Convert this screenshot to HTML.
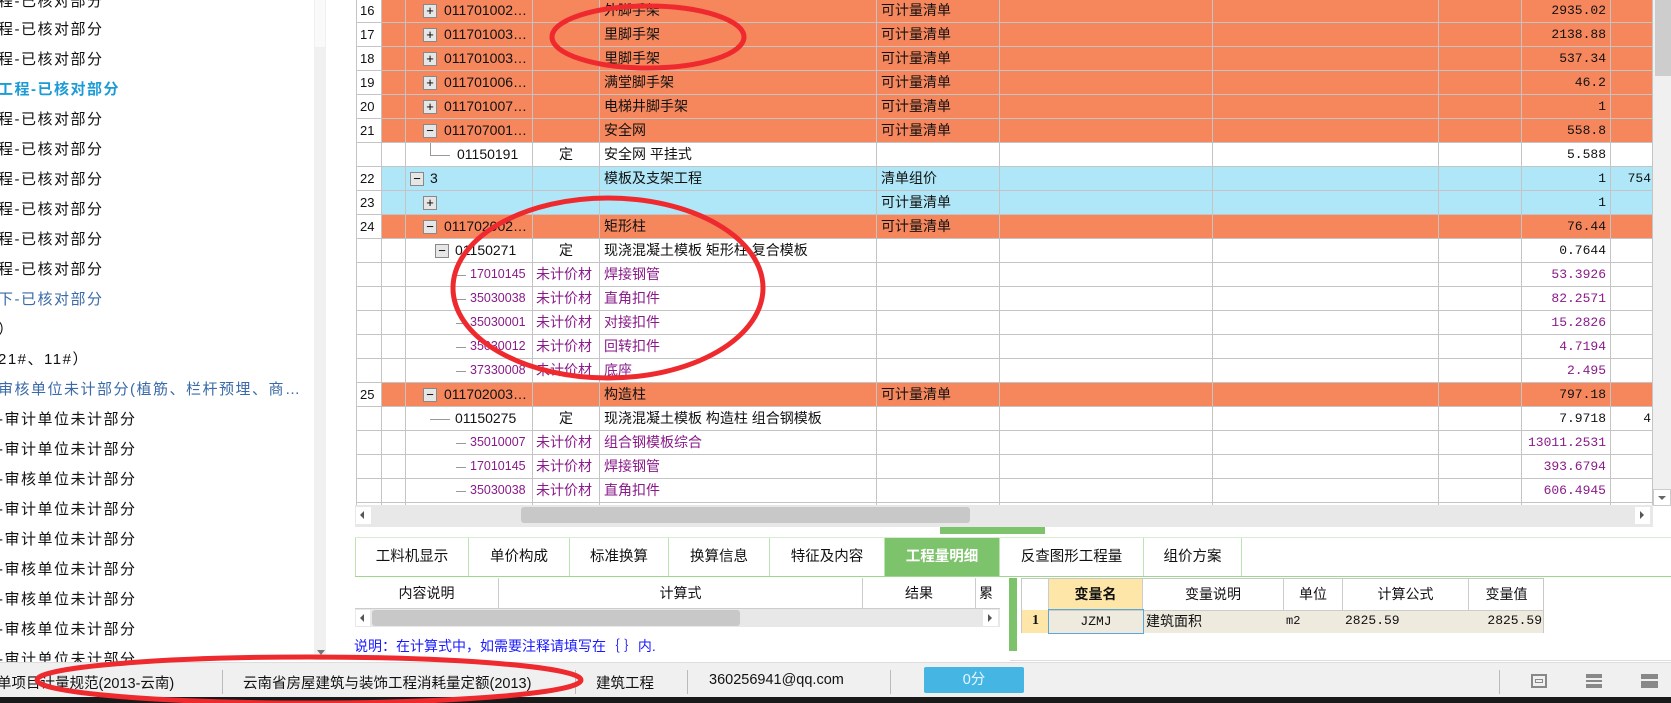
<!DOCTYPE html>
<html><head><meta charset="utf-8">
<style>
*{margin:0;padding:0;box-sizing:border-box}
body{width:1671px;height:703px;overflow:hidden;background:#fff;position:relative;font-family:"Liberation Sans","Noto Sans CJK SC",sans-serif;font-size:14px;color:#111}
.a{position:absolute}
.lt{position:absolute;left:-2px;font-size:15px;letter-spacing:1.5px;white-space:nowrap;line-height:20px}
.grid{position:absolute;left:356px;top:-1px;width:1297px}
.r{display:grid;grid-template-columns:26px 24px 127px 67px 277px 123px 213px 226px 83px 89px 42px;height:24px}
.r>div{border-right:1px solid #c4c4c4;border-bottom:1px solid #c4c4c4;height:24px;line-height:23px;white-space:nowrap;overflow:hidden;position:relative}
.r>div:first-child{background:#fff;padding-left:3px;font-size:13px;border-left:1px solid #c4c4c4}
.o>div{background:#f6875d}.b>div{background:#b0e7f8}
.q{text-align:right;padding-right:4px;font-family:"Liberation Mono",monospace;font-size:13px}
.p{color:#8a1a8a}
.pc{font-size:12.5px}
.bx{position:absolute;top:5px;width:14px;height:14px;border:1px solid #888;background:#e6e6e6;font-size:13px;line-height:11px;text-align:center;color:#000}
.c{text-align:center}
.tab{position:absolute;top:538px;height:39px;line-height:38px;text-align:center;border-right:1px solid #bde3b2;font-size:14.5px}
.sep{position:absolute;top:670px;width:1px;height:24px;background:#bbb}
</style></head><body>
<!-- left panel -->
<div class="lt" style="top:-8px">程-已核对部分</div>
<div class="lt" style="top:20px">程-已核对部分</div>
<div class="lt" style="top:50px">程-已核对部分</div>
<div class="lt" style="top:80px;color:#1c9bd6;font-weight:bold">工程-已核对部分</div>
<div class="lt" style="top:110px">程-已核对部分</div>
<div class="lt" style="top:140px">程-已核对部分</div>
<div class="lt" style="top:170px">程-已核对部分</div>
<div class="lt" style="top:200px">程-已核对部分</div>
<div class="lt" style="top:230px">程-已核对部分</div>
<div class="lt" style="top:260px">程-已核对部分</div>
<div class="lt" style="top:290px;color:#3a6aa8">下-已核对部分</div>
<div class="lt" style="top:320px">）</div>
<div class="lt" style="top:350px">21#、11#）</div>
<div class="lt" style="top:380px;color:#3a6aa8">审核单位未计部分(植筋、栏杆预埋、商…</div>
<div class="lt" style="top:410px">-审计单位未计部分</div>
<div class="lt" style="top:440px">-审计单位未计部分</div>
<div class="lt" style="top:470px">-审核单位未计部分</div>
<div class="lt" style="top:500px">-审计单位未计部分</div>
<div class="lt" style="top:530px">-审计单位未计部分</div>
<div class="lt" style="top:560px">-审核单位未计部分</div>
<div class="lt" style="top:590px">-审核单位未计部分</div>
<div class="lt" style="top:620px">-审核单位未计部分</div>
<div class="lt" style="top:650px">-审计单位未计部分</div>
<div class="a" style="left:314px;top:0;width:12px;height:660px;background:#f0f0f0"></div>
<div class="a" style="left:315px;top:0;width:10px;height:47px;background:#fafafa"></div>
<div class="a" style="left:317px;top:650px;width:0;height:0;border-left:4px solid transparent;border-right:4px solid transparent;border-top:5px solid #777"></div>

<!-- main grid -->
<div class="grid">
<div class="r o"><div>16</div><div></div><div><span class="bx" style="left:17px">+</span><span style="position:absolute;left:38px">011701002…</span></div><div></div><div style="padding-left:4px">外脚手架</div><div style="padding-left:4px">可计量清单</div><div></div><div></div><div></div><div class="q">2935.02</div><div></div></div>
<div class="r o"><div>17</div><div></div><div><span class="bx" style="left:17px">+</span><span style="position:absolute;left:38px">011701003…</span></div><div></div><div style="padding-left:4px">里脚手架</div><div style="padding-left:4px">可计量清单</div><div></div><div></div><div></div><div class="q">2138.88</div><div></div></div>
<div class="r o"><div>18</div><div></div><div><span class="bx" style="left:17px">+</span><span style="position:absolute;left:38px">011701003…</span></div><div></div><div style="padding-left:4px">里脚手架</div><div style="padding-left:4px">可计量清单</div><div></div><div></div><div></div><div class="q">537.34</div><div></div></div>
<div class="r o"><div>19</div><div></div><div><span class="bx" style="left:17px">+</span><span style="position:absolute;left:38px">011701006…</span></div><div></div><div style="padding-left:4px">满堂脚手架</div><div style="padding-left:4px">可计量清单</div><div></div><div></div><div></div><div class="q">46.2</div><div></div></div>
<div class="r o"><div>20</div><div></div><div><span class="bx" style="left:17px">+</span><span style="position:absolute;left:38px">011701007…</span></div><div></div><div style="padding-left:4px">电梯井脚手架</div><div style="padding-left:4px">可计量清单</div><div></div><div></div><div></div><div class="q">1</div><div></div></div>
<div class="r o"><div>21</div><div></div><div><span class="bx" style="left:17px">−</span><span style="position:absolute;left:38px">011707001…</span></div><div></div><div style="padding-left:4px">安全网</div><div style="padding-left:4px">可计量清单</div><div></div><div></div><div></div><div class="q">558.8</div><div></div></div>
<div class="r"><div></div><div></div><div><span class="a" style="left:24px;top:0;width:1px;height:12px;background:#999"></span><span class="a" style="left:24px;top:12px;width:20px;height:1px;background:#999"></span><span style="position:absolute;left:51px">01150191</span></div><div class="c">定</div><div style="padding-left:4px">安全网 平挂式</div><div></div><div></div><div></div><div></div><div class="q">5.588</div><div></div></div>
<div class="r b"><div>22</div><div></div><div><span class="bx" style="left:4px">−</span><span style="position:absolute;left:24px">3</span></div><div></div><div style="padding-left:4px">模板及支架工程</div><div style="padding-left:4px">清单组价</div><div></div><div></div><div></div><div class="q">1</div><div class="q" style="padding-right:1px">754</div></div>
<div class="r b"><div>23</div><div></div><div><span class="bx" style="left:17px">+</span></div><div></div><div></div><div style="padding-left:4px">可计量清单</div><div></div><div></div><div></div><div class="q">1</div><div></div></div>
<div class="r o"><div>24</div><div></div><div><span class="bx" style="left:17px">−</span><span style="position:absolute;left:38px">011702002…</span></div><div></div><div style="padding-left:4px">矩形柱</div><div style="padding-left:4px">可计量清单</div><div></div><div></div><div></div><div class="q">76.44</div><div></div></div>
<div class="r"><div></div><div></div><div><span class="bx" style="left:29px">−</span><span style="position:absolute;left:49px">01150271</span></div><div class="c">定</div><div style="padding-left:4px">现浇混凝土模板 矩形柱 复合模板</div><div></div><div></div><div></div><div></div><div class="q">0.7644</div><div></div></div>
<div class="r p"><div></div><div></div><div><span class="a" style="left:50px;top:12px;width:10px;height:1px;background:#999"></span><span class="pc" style="position:absolute;left:64px">17010145</span></div><div style="padding-left:3px">未计价材</div><div style="padding-left:4px">焊接钢管</div><div></div><div></div><div></div><div></div><div class="q">53.3926</div><div></div></div>
<div class="r p"><div></div><div></div><div><span class="a" style="left:50px;top:12px;width:10px;height:1px;background:#999"></span><span class="pc" style="position:absolute;left:64px">35030038</span></div><div style="padding-left:3px">未计价材</div><div style="padding-left:4px">直角扣件</div><div></div><div></div><div></div><div></div><div class="q">82.2571</div><div></div></div>
<div class="r p"><div></div><div></div><div><span class="a" style="left:50px;top:12px;width:10px;height:1px;background:#999"></span><span class="pc" style="position:absolute;left:64px">35030001</span></div><div style="padding-left:3px">未计价材</div><div style="padding-left:4px">对接扣件</div><div></div><div></div><div></div><div></div><div class="q">15.2826</div><div></div></div>
<div class="r p"><div></div><div></div><div><span class="a" style="left:50px;top:12px;width:10px;height:1px;background:#999"></span><span class="pc" style="position:absolute;left:64px">35030012</span></div><div style="padding-left:3px">未计价材</div><div style="padding-left:4px">回转扣件</div><div></div><div></div><div></div><div></div><div class="q">4.7194</div><div></div></div>
<div class="r p"><div></div><div></div><div><span class="a" style="left:50px;top:12px;width:10px;height:1px;background:#999"></span><span class="pc" style="position:absolute;left:64px">37330008</span></div><div style="padding-left:3px">未计价材</div><div style="padding-left:4px">底座</div><div></div><div></div><div></div><div></div><div class="q">2.495</div><div></div></div>
<div class="r o"><div>25</div><div></div><div><span class="bx" style="left:17px">−</span><span style="position:absolute;left:38px">011702003…</span></div><div></div><div style="padding-left:4px">构造柱</div><div style="padding-left:4px">可计量清单</div><div></div><div></div><div></div><div class="q">797.18</div><div></div></div>
<div class="r"><div></div><div></div><div><span class="a" style="left:24px;top:12px;width:20px;height:1px;background:#999"></span><span style="position:absolute;left:49px">01150275</span></div><div class="c">定</div><div style="padding-left:4px">现浇混凝土模板 构造柱 组合钢模板</div><div></div><div></div><div></div><div></div><div class="q">7.9718</div><div class="q" style="padding-right:1px">4</div></div>
<div class="r p"><div></div><div></div><div><span class="a" style="left:50px;top:12px;width:10px;height:1px;background:#999"></span><span class="pc" style="position:absolute;left:64px">35010007</span></div><div style="padding-left:3px">未计价材</div><div style="padding-left:4px">组合钢模板综合</div><div></div><div></div><div></div><div></div><div class="q">13011.2531</div><div></div></div>
<div class="r p"><div></div><div></div><div><span class="a" style="left:50px;top:12px;width:10px;height:1px;background:#999"></span><span class="pc" style="position:absolute;left:64px">17010145</span></div><div style="padding-left:3px">未计价材</div><div style="padding-left:4px">焊接钢管</div><div></div><div></div><div></div><div></div><div class="q">393.6794</div><div></div></div>
<div class="r p"><div></div><div></div><div><span class="a" style="left:50px;top:12px;width:10px;height:1px;background:#999"></span><span class="pc" style="position:absolute;left:64px">35030038</span></div><div style="padding-left:3px">未计价材</div><div style="padding-left:4px">直角扣件</div><div></div><div></div><div></div><div></div><div class="q">606.4945</div><div></div></div>
<div class="r p"><div></div><div></div><div></div><div></div><div></div><div></div><div></div><div></div><div></div><div></div><div></div></div>
</div>
<!-- v scrollbar -->
<div class="a" style="left:1653px;top:0;width:18px;height:506px;background:#f0f0f0"></div>
<div class="a" style="left:1655px;top:0;width:16px;height:76px;background:#cdcdcd"></div>
<div class="a" style="left:1653px;top:489px;width:18px;height:17px;background:#fff;border:1px solid #ccc"></div>
<div class="a" style="left:1658px;top:496px;border-left:4px solid transparent;border-right:4px solid transparent;border-top:4px solid #666"></div>
<!-- h scrollbar -->
<div class="a" style="left:355px;top:505px;width:1298px;height:22px;background:#e8e8e8"></div>
<div class="a" style="left:521px;top:507px;width:449px;height:16px;background:#c8c8c8;border-radius:3px"></div>
<div class="a" style="left:356px;top:507px;width:15px;height:17px;background:#fff"></div>
<div class="a" style="left:360px;top:511px;border-top:4px solid transparent;border-bottom:4px solid transparent;border-right:4px solid #555"></div>
<div class="a" style="left:1635px;top:507px;width:15px;height:17px;background:#fff"></div>
<div class="a" style="left:1640px;top:511px;border-top:4px solid transparent;border-bottom:4px solid transparent;border-left:4px solid #555"></div>
<div class="a" style="left:940px;top:527px;width:105px;height:7px;background:#7dc36b"></div>
<!-- tabs -->
<div class="a" style="left:355px;top:537px;width:1316px;height:1px;background:#d9ecd2"></div>
<div class="tab" style="left:355px;width:114px;border-left:1px solid #bde3b2">工料机显示</div>
<div class="tab" style="left:469px;width:101px">单价构成</div>
<div class="tab" style="left:570px;width:99px">标准换算</div>
<div class="tab" style="left:669px;width:101px">换算信息</div>
<div class="tab" style="left:770px;width:115px">特征及内容</div>
<div class="tab" style="left:885px;width:115px;background:#7dc36b;color:#fff;font-weight:bold">工程量明细</div>
<div class="tab" style="left:1000px;width:144px">反查图形工程量</div>
<div class="tab" style="left:1144px;width:98px">组价方案</div>
<div class="a" style="left:355px;top:576px;width:1316px;height:1px;background:#9fd68f"></div>
<!-- lower left grid -->
<div class="a" style="left:355px;top:578px;width:645px;height:31px;border-bottom:1px solid #ccc"></div>
<div class="a c" style="left:355px;top:578px;width:144px;height:31px;line-height:30px;border-right:1px solid #ccc">内容说明</div>
<div class="a c" style="left:499px;top:578px;width:364px;height:31px;line-height:30px;border-right:1px solid #ccc">计算式</div>
<div class="a c" style="left:863px;top:578px;width:113px;height:31px;line-height:30px;border-right:1px solid #ccc">结果</div>
<div class="a" style="left:979px;top:578px;width:21px;height:31px;line-height:30px;overflow:hidden">累计</div>
<div class="a" style="left:355px;top:609px;width:645px;height:18px;background:#e8e8e8"></div>
<div class="a" style="left:372px;top:610px;width:368px;height:16px;background:#c8c8c8;border-radius:3px"></div>
<div class="a" style="left:356px;top:610px;width:14px;height:16px;background:#fff"></div>
<div class="a" style="left:360px;top:614px;border-top:4px solid transparent;border-bottom:4px solid transparent;border-right:4px solid #555"></div>
<div class="a" style="left:983px;top:610px;width:15px;height:16px;background:#fff"></div>
<div class="a" style="left:988px;top:614px;border-top:4px solid transparent;border-bottom:4px solid transparent;border-left:4px solid #555"></div>
<div class="a" style="left:354px;top:636px;color:#1a1aff;font-size:14px">说明：在计算式中，如需要注释请填写在｛ ｝内.</div>
<div class="a" style="left:1009px;top:578px;width:8px;height:73px;background:#7dc36b"></div>
<div class="a" style="left:1010px;top:660px;width:661px;height:1px;background:#ddd"></div>
<!-- lower right grid -->
<div class="a" style="left:1021px;top:578px;width:523px;height:55px;border:1px solid #c8c8c8"></div>
<div class="a" style="left:1022px;top:579px;width:27px;height:31px;border-right:1px solid #ccc"></div>
<div class="a c" style="left:1049px;top:579px;width:94px;height:31px;line-height:30px;background:#fde6a8;font-weight:bold;border-right:1px solid #ccc">变量名</div>
<div class="a c" style="left:1143px;top:579px;width:141px;height:31px;line-height:30px;border-right:1px solid #ccc">变量说明</div>
<div class="a c" style="left:1284px;top:579px;width:59px;height:31px;line-height:30px;border-right:1px solid #ccc">单位</div>
<div class="a c" style="left:1343px;top:579px;width:126px;height:31px;line-height:30px;border-right:1px solid #ccc">计算公式</div>
<div class="a c" style="left:1469px;top:579px;width:75px;height:31px;line-height:30px">变量值</div>
<div class="a" style="left:1022px;top:610px;width:521px;height:23px;background:#eeebde;border-top:1px solid #ccc"></div>
<div class="a c" style="left:1022px;top:610px;width:27px;height:23px;line-height:22px;background:#fde6a8;font-weight:bold;font-family:'Liberation Serif',serif">1</div>
<div class="a c" style="left:1048px;top:609px;width:96px;height:25px;line-height:23px;border:1px solid #5aa8d8;font-family:'Liberation Mono',monospace;font-size:13px">JZMJ</div>
<div class="a" style="left:1146px;top:610px;line-height:22px">建筑面积</div>
<div class="a" style="left:1286px;top:610px;line-height:22px;font-family:'Liberation Mono',monospace;font-size:12px">m2</div>
<div class="a" style="left:1345px;top:610px;line-height:22px;font-family:'Liberation Mono',monospace;font-size:13px">2825.59</div>
<div class="a" style="left:1469px;top:610px;width:73px;text-align:right;line-height:22px;font-family:'Liberation Mono',monospace;font-size:13px">2825.59</div>
<!-- status bar -->
<div class="a" style="left:0;top:662px;width:1671px;height:35px;background:#f0f0f0;border-top:1px solid #ddd"></div>
<div class="a" style="left:-3px;top:672px;font-size:14.5px">单项目计量规范(2013-云南)</div>
<div class="sep" style="left:222px"></div>
<div class="a" style="left:243px;top:672px;font-size:14.5px">云南省房屋建筑与装饰工程消耗量定额(2013)</div>
<div class="sep" style="left:575px"></div>
<div class="a" style="left:596px;top:672px;font-size:14.5px">建筑工程</div>
<div class="sep" style="left:687px"></div>
<div class="a" style="left:709px;top:672px;font-size:14.5px">360256941@qq.com</div>
<div class="sep" style="left:890px"></div>
<div class="a c" style="left:924px;top:667px;width:100px;height:26px;line-height:26px;background:#45b6e4;color:#e8f6ff;border-radius:2px;font-size:14.5px">0分</div>
<div class="sep" style="left:1499px"></div>
<div class="a" style="left:1531px;top:674px;width:16px;height:14px;border:2px solid #888"></div>
<div class="a" style="left:1535px;top:679px;width:8px;height:4px;border:1px solid #888"></div>
<div class="a" style="left:1586px;top:674px;width:16px;height:14px;background:linear-gradient(#888 0 4px,transparent 4px 6px,#888 6px 8px,transparent 8px 10px,#888 10px)"></div>
<div class="a" style="left:1641px;top:674px;width:17px;height:14px;background:linear-gradient(#888 0 5px,transparent 5px 7px,#888 7px)"></div>
<div class="a" style="left:0;top:697px;width:1671px;height:6px;background:#1a1a1a"></div>
<!-- red ellipses -->
<svg class="a" style="left:0;top:0" width="1671" height="703">
<g fill="none" stroke="#ee2a2f" stroke-width="5">
<ellipse cx="648" cy="37" rx="96" ry="31"/>
<ellipse cx="608" cy="288" rx="155" ry="90"/>
<ellipse cx="309" cy="680" rx="272" ry="23"/>
</g></svg>
</body></html>
